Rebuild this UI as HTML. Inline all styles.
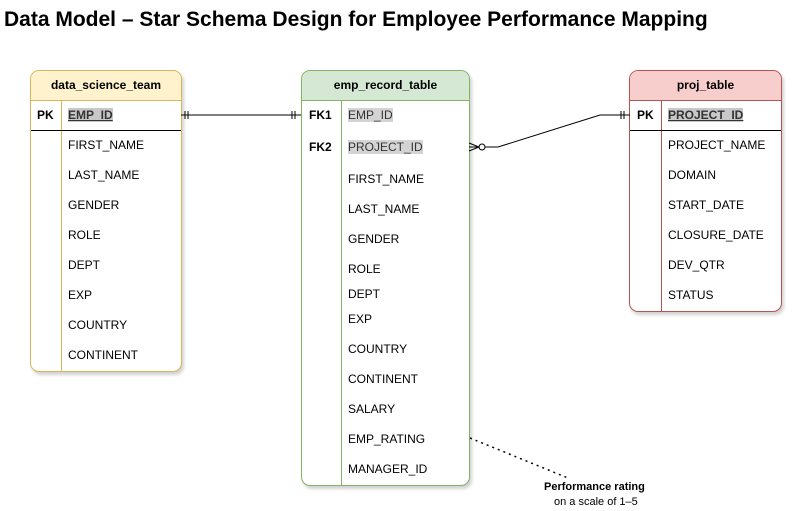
<!DOCTYPE html><html><head><style>
body{margin:0;width:798px;height:511px;background:#fff;font-family:"Liberation Sans",sans-serif;position:relative;overflow:hidden}
.t{position:absolute;font-size:12px;color:#000;white-space:nowrap;line-height:14px}
.b{font-weight:bold}
.box{position:absolute;border:1px solid;border-radius:9px;box-shadow:2px 3px 3px rgba(0,0,0,.18);background:#fff;overflow:hidden}
.hd{position:absolute;left:0;right:0;top:0;height:29px;border-bottom:1px solid;text-align:center;font-weight:bold;font-size:12px;line-height:29px}
.vl{position:absolute;top:30px;bottom:0;width:1px}
.hl{position:absolute;left:0;right:0;height:1px;background:#000}
.k{background:#c8c8c8;text-decoration:underline;font-weight:bold;color:#333}
.hi{background:#d4d4d4;color:#333}
</style></head><body>
<div class="t b" style="left:4px;top:7px;font-size:21px;line-height:26px">Data Model – Star Schema Design for Employee Performance Mapping</div>

<div class="box" style="left:30px;top:70px;width:150px;height:300px;border-color:#d6b656">
<div class="hd" style="background:#fff2cc;border-color:#d6b656">data_science_team</div>
<div class="vl" style="left:30px;background:#d6b656"></div>
<div class="hl" style="top:59px"></div></div>
<div class="box" style="left:301px;top:70px;width:167px;height:414px;border-color:#82b366">
<div class="hd" style="background:#d5e8d4;border-color:#82b366">emp_record_table</div>
<div class="vl" style="left:39px;background:#82b366"></div></div>
<div class="box" style="left:629px;top:70px;width:151px;height:240px;border-color:#b85450">
<div class="hd" style="background:#f8cecc;border-color:#b85450">proj_table</div>
<div class="vl" style="left:31px;background:#b85450"></div>
<div class="hl" style="top:59px"></div></div>

<div class="t b" style="left:37px;top:108px">PK</div><div class="t" style="left:68px;top:108px"><span class="k">EMP_ID</span></div>
<div class="t" style="left:68px;top:138px">FIRST_NAME</div>
<div class="t" style="left:68px;top:168px">LAST_NAME</div>
<div class="t" style="left:68px;top:198px">GENDER</div>
<div class="t" style="left:68px;top:228px">ROLE</div>
<div class="t" style="left:68px;top:258px">DEPT</div>
<div class="t" style="left:68px;top:288px">EXP</div>
<div class="t" style="left:68px;top:318px">COUNTRY</div>
<div class="t" style="left:68px;top:348px">CONTINENT</div>

<div class="t b" style="left:309px;top:108px">FK1</div><div class="t" style="left:348px;top:108px"><span class="hi">EMP_ID</span></div>
<div class="t b" style="left:309px;top:140px">FK2</div><div class="t" style="left:348px;top:140px"><span class="hi">PROJECT_ID</span></div>
<div class="t" style="left:348px;top:172px">FIRST_NAME</div>
<div class="t" style="left:348px;top:202px">LAST_NAME</div>
<div class="t" style="left:348px;top:232px">GENDER</div>
<div class="t" style="left:348px;top:262px">ROLE</div>
<div class="t" style="left:348px;top:287px">DEPT</div>
<div class="t" style="left:348px;top:312px">EXP</div>
<div class="t" style="left:348px;top:342px">COUNTRY</div>
<div class="t" style="left:348px;top:372px">CONTINENT</div>
<div class="t" style="left:348px;top:402px">SALARY</div>
<div class="t" style="left:348px;top:432px">EMP_RATING</div>
<div class="t" style="left:348px;top:462px">MANAGER_ID</div>

<div class="t b" style="left:637px;top:108px">PK</div><div class="t" style="left:668px;top:108px"><span class="k">PROJECT_ID</span></div>
<div class="t" style="left:668px;top:138px">PROJECT_NAME</div>
<div class="t" style="left:668px;top:168px">DOMAIN</div>
<div class="t" style="left:668px;top:198px">START_DATE</div>
<div class="t" style="left:668px;top:228px">CLOSURE_DATE</div>
<div class="t" style="left:668px;top:258px">DEV_QTR</div>
<div class="t" style="left:668px;top:288px">STATUS</div>

<svg style="position:absolute;left:0;top:0" width="798" height="511">
<g stroke="#000" stroke-width="1" fill="none">
<path d="M181 115H301M185 111v8M188 111v8M292 111v8M295 111v8"/>
<path d="M469 147H498L600 115H630M621 111v8M624 111v8"/>
<circle cx="482" cy="147" r="3" fill="#fff"/>
<path d="M469 143L479 147L469 151"/>
<path d="M470 438L568 478" stroke-dasharray="2,4" stroke-width="1.5"/>
</g></svg>
<div class="t b" style="left:544px;top:481px;font-size:11px;line-height:13px">Performance rating</div>
<div class="t" style="left:554px;top:496px;font-size:11px;line-height:13px">on a scale of 1–5</div>
</body></html>
